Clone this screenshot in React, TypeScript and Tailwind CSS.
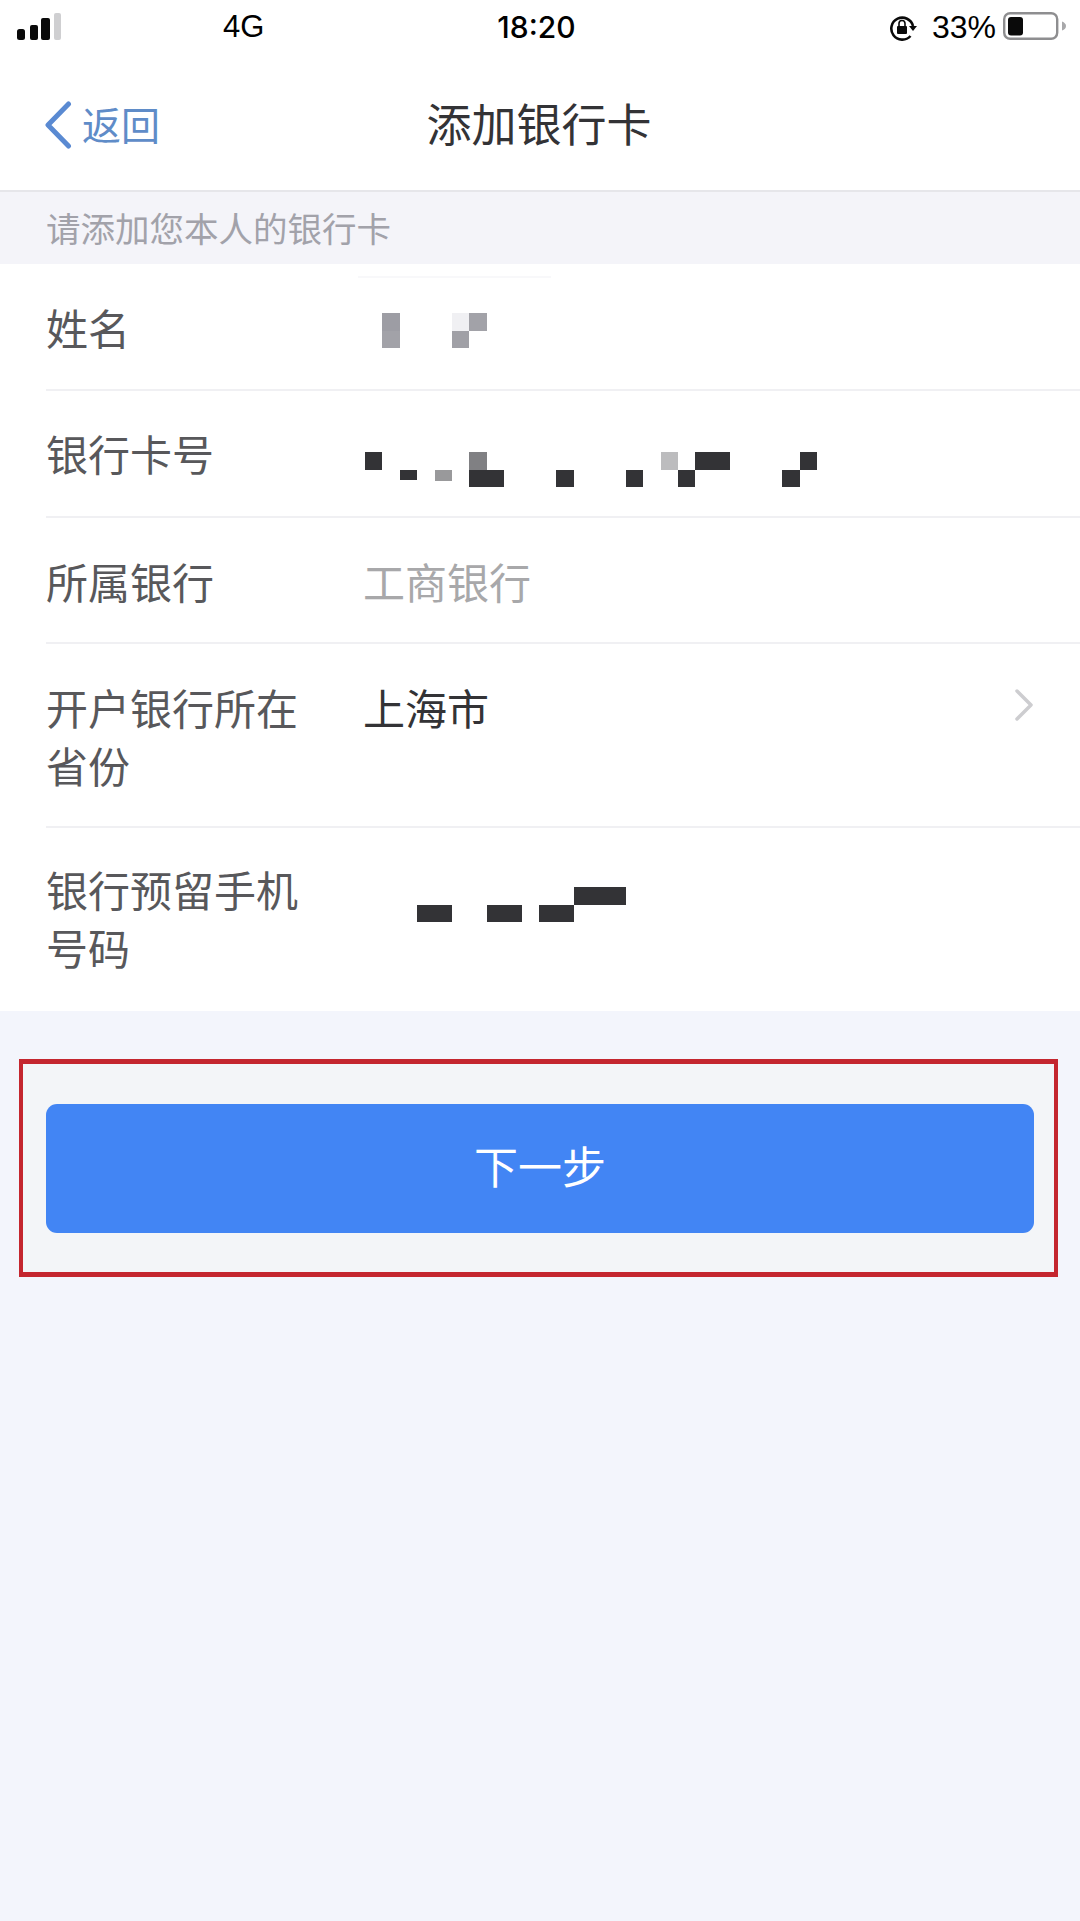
const CJK = "font-['Liberation_Sans','Noto_Sans_CJK_SC',sans-serif]";

type Cell = [number, number, string, string?];

const D = "bg-[#333336]";

function Mosaic({ cells }: { cells: Cell[] }) {
  return (
    <div className="grid grid-cols-[repeat(26,17.4px)] grid-rows-[17.5px_17.5px]">
      {cells.map(([col, row, cls, extra], i) => (
        <div key={i} className={`${cls} ${extra ?? ""}`} style={{ gridColumnStart: col + 1, gridRowStart: row + 1 }} />
      ))}
    </div>
  );
}

function Row({
  label,
  children,
  h,
  last,
}: {
  label: React.ReactNode;
  children?: React.ReactNode;
  h: string;
  last?: boolean;
}) {
  return (
    <div className={`ml-[46px] flex items-start ${h} ${last ? "" : "border-b-2 border-[#f0f0f3]"}`}>
      <div className="w-[317px] shrink-0 text-[42px] leading-[57.5px] text-[#58585b]">{label}</div>
      <div className="flex-1">{children}</div>
    </div>
  );
}

export default function App() {
  return (
    <div className={`${CJK} flex min-h-[1921px] w-[1080px] flex-col bg-[#f3f5fc]`}>
      <div className="bg-white">
        {/* status bar */}
        <div className="flex h-[54px] items-start text-black">
          <svg width="46" height="28" viewBox="0 0 46 28" className="ml-[16px] mt-[13px] shrink-0">
            <rect x="1" y="16" width="8" height="11" rx="2.5" fill="#0a0a0a" />
            <rect x="14" y="12" width="8" height="15" rx="2" fill="#0a0a0a" />
            <rect x="25" y="5" width="9" height="22" rx="2" fill="#0a0a0a" />
            <rect x="38" y="0" width="7" height="27" rx="2" fill="#cfcfd1" />
          </svg>
          <div className="ml-[161px] mt-[9px] font-['Liberation_Sans'] text-[31px] leading-[36px]">4G</div>
          <div className="ml-[233px] mt-[9px] font-['Inter'] text-[30px] font-medium leading-[36px]">18:20</div>
          <div className="ml-auto mr-[13px] flex items-start">
            <svg width="28" height="26" viewBox="0 0 28 26" className="mt-[15px]" fill="none">
              <path d="M21.5 21A11 11 0 1 1 24 11" stroke="#0a0a0a" strokeWidth="2.6" />
              <path d="M20 11h8l-4 5z" fill="#0a0a0a" />
              <rect x="8" y="11" width="10" height="8" rx="1" fill="#0a0a0a" />
              <path d="M10 11V8.500a3 3 0 0 1 6 0V11" stroke="#0a0a0a" strokeWidth="1.6" />
            </svg>
            <div className="ml-[15px] mt-[9px] font-['Liberation_Sans'] text-[32px] leading-[36px]">33%</div>
            <svg width="64" height="28" viewBox="0 0 64 28" className="ml-[7px] mt-[12px]" fill="none">
              <rect x="1.2" y="1.2" width="53" height="25.6" rx="6" stroke="#8e8e90" strokeWidth="2.4" />
              <rect x="5" y="5" width="15" height="18.500" rx="3" fill="#0a0a0a" />
              <path d="M59 9.500c2.500 1 4 2.500 4 4.500s-1.500 3.500-4 4.500z" fill="#a8a8aa" />
            </svg>
          </div>
        </div>
        {/* nav bar */}
        <div className="flex h-[138px] items-start border-b-2 border-[#e6e6ea]">
          <div className="flex flex-1 items-start">
            <svg width="28" height="48" viewBox="0 0 28 48" fill="none" className="ml-[44px] mt-[47px]">
              <path d="M24.500 3 4 24l20.500 21" stroke="#5a8ad2" strokeWidth="5" strokeLinecap="round" strokeLinejoin="round" />
            </svg>
            <div className="ml-[10px] mt-[48px] text-[39px] leading-[50px] text-[#5f8cc8]">返回</div>
          </div>
          <div className="-ml-[2px] mt-[41px] text-[45px] leading-[64px] text-[#333336]">添加银行卡</div>
          <div className="flex-1" />
        </div>
      </div>

      {/* hint */}
      <div className="h-[72px] bg-[#f4f4f9] pl-[46px] pt-[16px] text-[34.500px] leading-[44px] text-[#a2a2aa]">请添加您本人的银行卡</div>

      {/* form */}
      <div className="bg-white">
        <Row h="h-[127px] pt-[38px]" label="姓名">
          <div className="-ml-[5px] -mt-[26px] h-[2px] w-[193px] bg-[#f8f8fa]" />
          <div className="mt-[35px] pl-[2px]">
            <Mosaic
              cells={[
                [1, 0, "bg-[#9d9da4]"],
                [1, 1, "bg-[#a2a2a8]"],
                [5, 0, "bg-[#f0f0f3]"],
                [6, 0, "bg-[#a2a2a8]"],
                [5, 1, "bg-[#a0a0a6]"],
              ]}
            />
          </div>
        </Row>
        <Row h="h-[127px] pt-[37px]" label="银行卡号">
          <div className="mt-[24px] pl-[2px]">
            <Mosaic
              cells={[
                [0, 0, D],
                [2, 1, D, "h-[10px]"],
                [4, 1, "bg-[#99999b]", "h-[11px]"],
                [6, 0, "bg-[#808083]"],
                [6, 1, D],
                [7, 1, D],
                [11, 1, D],
                [15, 1, D],
                [17, 0, "bg-[#bcbcbe]"],
                [18, 1, D],
                [19, 0, D],
                [20, 0, D],
                [24, 1, D],
                [25, 0, D],
              ]}
            />
          </div>
        </Row>
        <Row h="h-[126px] pt-[38px]" label="所属银行">
          <div className="text-[42px] leading-[57.5px] text-[#a8a8aa]">工商银行</div>
        </Row>
        <Row
          h="h-[184px] pt-[38px]"
          label={
            <>
              开户银行所在
              <br />
              省份
            </>
          }
        >
          <div className="flex items-start justify-between">
            <div className="text-[42px] leading-[57.5px] text-[#333336]">上海市</div>
            <svg width="20" height="32" viewBox="0 0 20 32" fill="none" className="mr-[46px] mt-[7px]">
              <path d="M3 2l14 14L3 30" stroke="#cdcdd0" strokeWidth="3.500" strokeLinecap="round" strokeLinejoin="round" />
            </svg>
          </div>
        </Row>
        <Row
          h="h-[183px] pt-[36px]"
          last
          label={
            <>
              银行预留手机
              <br />
              号码
            </>
          }
        >
          <div className="mt-[23px] pl-[2px]">
            <Mosaic
              cells={[
                [3, 1, D],
                [4, 1, D],
                [7, 1, D],
                [8, 1, D],
                [10, 1, D],
                [11, 1, D],
                [12, 0, D],
                [13, 0, D],
                [14, 0, D],
              ]}
            />
          </div>
        </Row>
      </div>

      {/* button with red annotation frame */}
      <div className="ml-[19px] mr-[22px] mt-[48px] h-[218px] border-x-4 border-y-[5px] border-[#c4262f] bg-[#f3f5f8] pl-[23px] pr-[20px] pt-[40px]">
        <div className="flex h-[129px] items-center justify-center rounded-[11px] bg-[#4285f4] text-[44px] text-white">下一步</div>
      </div>
    </div>
  );
}
